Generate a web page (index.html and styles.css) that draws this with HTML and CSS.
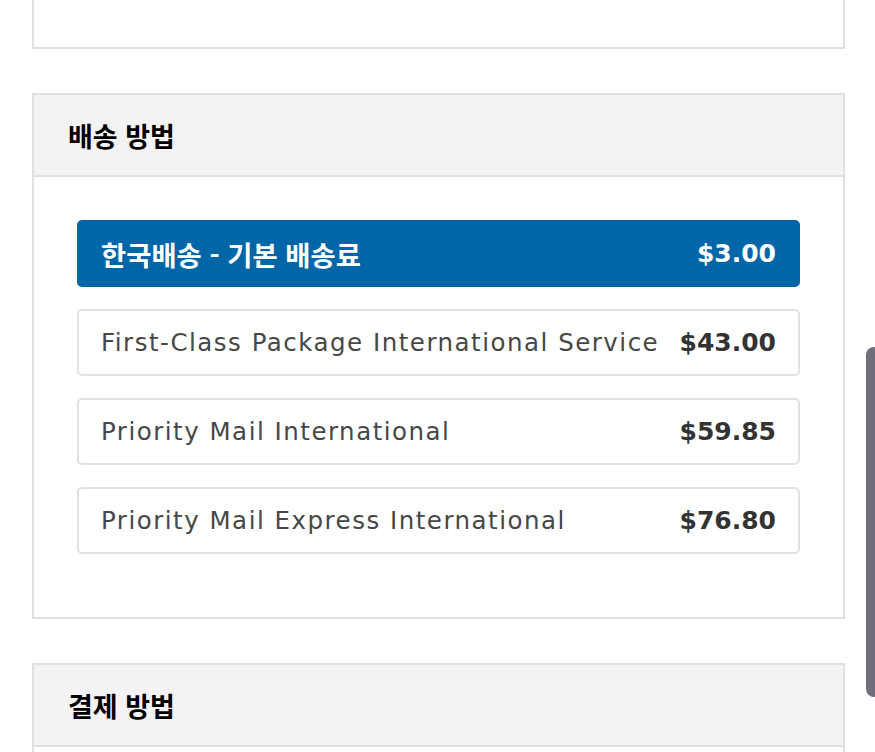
FILE: index.html
```html
<!DOCTYPE html>
<html lang="ko">
<head>
<meta charset="utf-8">
<link rel="stylesheet" href="styles.css">
</head>
<body>
<div class="page">
  <section class="card card-top"></section>

  <section class="card">
    <header class="card-head"><h2>배송 방법</h2></header>
    <div class="card-body">
      <div class="opt opt-active"><span class="name ko">한국배송 - 기본 배송료</span><span class="price">$3.00</span></div>
      <div class="opt"><span class="name">First-Class Package International Service</span><span class="price">$43.00</span></div>
      <div class="opt"><span class="name">Priority Mail International</span><span class="price">$59.85</span></div>
      <div class="opt"><span class="name">Priority Mail Express International</span><span class="price">$76.80</span></div>
    </div>
  </section>

  <section class="card">
    <header class="card-head"><h2>결제 방법</h2></header>
    <div class="card-body"></div>
  </section>
</div>
<div class="scrollbar"></div>
</body>
</html>
```

FILE: styles.css
```css
html, body {
  margin: 0;
  padding: 0;
  background: #ffffff;
  overflow: hidden;
}
body {
  width: 875px;
  height: 752px;
  position: relative;
  font-family: "DejaVu Sans", "Noto Sans CJK KR", sans-serif;
}
.page {
  padding-left: 32px;
  width: 813px;
}
.card {
  border: 2px solid #e0e0e0;
  background: #fff;
  margin-bottom: 44px;
}
.card-top {
  height: 100px;
  margin-top: -53px;
  border-top: none;
}
.card-head {
  background: #f3f3f3;
  height: 80px;
  border-bottom: 2px solid #e0e0e0;
  display: flex;
  align-items: center;
  padding-left: 34px;
}
.card-head h2 {
  margin: 0;
  font-family: "Noto Sans CJK KR", sans-serif;
  font-weight: 700;
  font-size: 27px;
  color: #000;
  letter-spacing: 0;
}
.card-body {
  padding: 43px 43px 41px 43px;
}
.opt {
  height: 67px;
  box-sizing: border-box;
  border: 2px solid #e2e2e2;
  border-radius: 5px;
  margin-bottom: 22px;
  display: flex;
  align-items: center;
  justify-content: space-between;
  padding: 0 22px;
  color: #474747;
  font-size: 24.5px;
  letter-spacing: 1.5px;
}
.opt-active {
  background: #0066a8;
  border-color: #0066a8;
  color: #fff;
}
.name {
  white-space: nowrap;
}
.name.ko {
  font-family: "Noto Sans CJK KR", sans-serif;
  font-weight: 700;
  font-size: 27.4px;
  letter-spacing: 0;
}
.price {
  font-weight: 700;
  color: #333;
  font-size: 25px;
  letter-spacing: 0;
}
.opt-active .price {
  color: #fff;
}
.scrollbar {
  position: absolute;
  left: 866px;
  top: 347px;
  width: 14px;
  height: 350px;
  border-radius: 8px 0 0 8px;
  background: #6f6e7b;
}
```
